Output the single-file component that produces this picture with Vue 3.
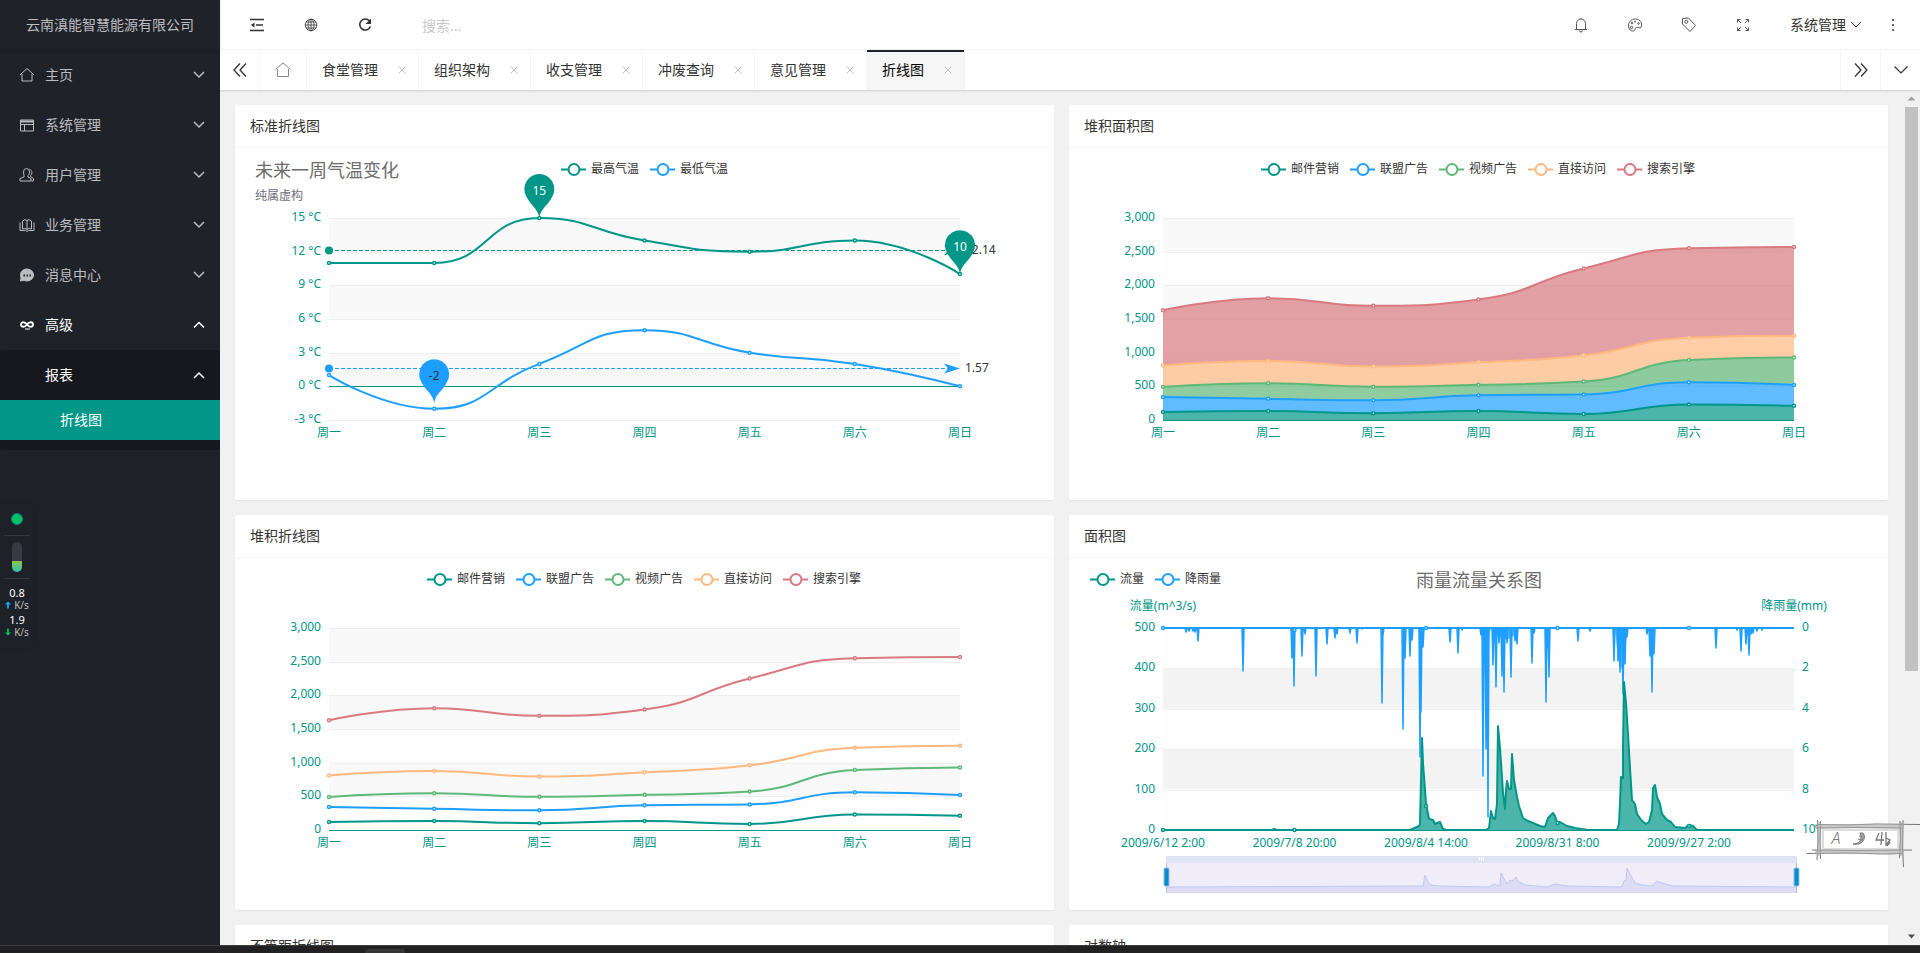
<script setup>
const GREEN = '#009688'
const BLUE = '#1E9FFF'
const palette = [GREEN, BLUE, '#5FB878', '#FFB980', '#D87A80']
const days = ['周一', '周二', '周三', '周四', '周五', '周六', '周日']

/* Plot area inside every chart, in SVG units */
const plot = { left: 94, right: 725, top: 70, bottom: 272 }
const plotWidth = plot.right - plot.left
const plotHeight = plot.bottom - plot.top
const dayX = (i) => plot.left + (plotWidth * i) / 6
const scaleY = (v, min, max) => plot.bottom - (plotHeight * (v - min)) / (max - min)

const menu = [
  { name: '主页', icon: 'home' },
  { name: '系统管理', icon: 'window' },
  { name: '用户管理', icon: 'user' },
  { name: '业务管理', icon: 'book' },
  { name: '消息中心', icon: 'chat' },
  { name: '高级', icon: 'infinity', open: true },
]
const tabs = ['食堂管理', '组织架构', '收支管理', '冲废查询', '意见管理', '折线图']

const between = (v, a, b) => Math.max(Math.min(v, Math.max(a, b)), Math.min(a, b))

/* Smooth segments whose control points never leave the range of their two ends */
function curveSegments(points, smooth = 0.5) {
  const n = points.length
  const incoming = points.map((p) => [...p])
  const outgoing = points.map((p) => [...p])
  for (let i = 1; i < n - 1; i++) {
    const [p, a, b] = [points[i], points[i - 1], points[i + 1]]
    const la = Math.hypot(p[0] - a[0], p[1] - a[1])
    const lb = Math.hypot(p[0] - b[0], p[1] - b[1])
    const ratio = lb / (la + lb)
    for (const k of [0, 1]) {
      const v = b[k] - a[k]
      let out = between(p[k] + v * smooth * ratio, p[k], b[k])
      let inc = p[k] - ((out - p[k]) * la) / lb
      inc = between(inc, a[k], p[k])
      out = p[k] + ((p[k] - inc) * lb) / la
      incoming[i][k] = inc
      outgoing[i][k] = out
    }
  }
  return { incoming, outgoing }
}
function forward(points) {
  const { incoming, outgoing } = curveSegments(points)
  return points.slice(1).map((p, i) => `C${outgoing[i]} ${incoming[i + 1]} ${p}`).join('')
}
function backward(points) {
  const { incoming, outgoing } = curveSegments(points)
  let d = ''
  for (let i = points.length - 1; i > 0; i--) d += `C${incoming[i]} ${outgoing[i - 1]} ${points[i - 1]}`
  return d
}
const linePath = (points) => `M${points[0]}${forward(points)}`

/* Weekly temperature */
const tempSeries = [
  { name: '最高气温', color: GREEN, data: [11, 11, 15, 13, 12, 13, 10], avg: '12.14' },
  { name: '最低气温', color: BLUE, data: [1, -2, 2, 5, 3, 2, 0], avg: '1.57' },
].map((s) => {
  const points = s.data.map((v, i) => [dayX(i), scaleY(v, -3, 15)])
  return { ...s, points, path: linePath(points), avgY: Math.floor(scaleY(Number(s.avg), -3, 15)) + 0.5 }
})
const pins = [
  { x: dayX(2), y: scaleY(15, -3, 15), label: '15', color: GREEN, text: '#fff' },
  { x: dayX(6), y: scaleY(10, -3, 15), label: '10', color: GREEN, text: '#fff' },
  { x: dayX(1), y: scaleY(-1.5, -3, 15), label: '-2', color: BLUE, text: '#333' },
]

/* Stacked traffic sources */
const sources = [
  ['邮件营销', [120, 132, 101, 134, 90, 230, 210]],
  ['联盟广告', [220, 182, 191, 234, 290, 330, 310]],
  ['视频广告', [150, 232, 201, 154, 190, 330, 410]],
  ['直接访问', [320, 332, 301, 334, 390, 330, 320]],
  ['搜索引擎', [820, 932, 901, 934, 1290, 1330, 1320]],
]
const totals = [0, 0, 0, 0, 0, 0, 0]
let below = totals.map((_, i) => [dayX(i), plot.bottom])
const stacked = sources.map(([name, data], k) => {
  data.forEach((v, i) => (totals[i] += v))
  const points = totals.map((v, i) => [dayX(i), scaleY(v, 0, 3000)])
  const path = linePath(points)
  const area = `${path}L${below[below.length - 1]}${backward(below)}Z`
  below = points
  return { name, color: palette[k], points, path, area }
})

function legend(names, start) {
  const widths = names.map((n) => n.length * 12 + 31)
  const total = widths.reduce((a, b) => a + b, 0) + 10 * (names.length - 1)
  let x = start ?? Math.ceil((819 - total) / 2)
  return names.map((name, i) => {
    const item = { name, x, color: palette[i] }
    x += widths[i] + 10
    return item
  })
}
function axis(labels, firstShaded) {
  const step = plotHeight / (labels.length - 1)
  return {
    ticks: labels.map((label, i) => ({ label, y: plot.top + step * i, line: Math.round(plot.top + step * i) + 0.5 })),
    bands: labels.slice(1).map((_, i) => ({ y: plot.top + step * i, height: step, shaded: (i % 2 === 0) === firstShaded })),
  }
}
const stackAxis = axis(['3,000', '2,500', '2,000', '1,500', '1,000', '500', '0'], true)
const stackLegend = legend(sources.map((s) => s[0]))

/* Rainfall: [x, depth] of each burst; flow: outline of the river level */
const rain = [
  [117, 5], [120, 4], [124, 4], [126, 5], [129, 14], [174, 44], [174, 16], [223, 31], [225, 59], [233, 29], [236, 7],
  [247, 49], [247, 12], [258, 17], [266, 11], [268, 7], [281, 6], [288, 16], [293, 2], [313, 76], [314, 8], [334, 102],
  [336, 31], [341, 29], [343, 13], [351, 130], [352, 85], [354, 20], [381, 15], [389, 26], [393, 3], [412, 8],
  [414, 149], [417, 122], [419, 190], [424, 38], [427, 60], [430, 16], [433, 49], [435, 65], [438, 16], [442, 50],
  [446, 14], [448, 17], [463, 36], [465, 6], [477, 75], [478, 21], [480, 50], [509, 14], [521, 4], [545, 34],
  [549, 34], [551, 45], [554, 67], [556, 37], [558, 10], [578, 7], [581, 29], [583, 65], [585, 27], [647, 21],
  [668, 3], [672, 24], [677, 17], [680, 28], [682, 7], [684, 6], [688, 4], [693, 3],
]
const rainPath = rain.map(([x, d]) => `M${x - 1} 70L${x} ${70 + d - 1}L${x + 1} 70`).join('')
const rainFill = 'M546 70L549 100L552 112L556 100L558 70ZM411 70L414 78L420 78L422 70ZM424 70L427 78L438 82L448 76L449 70Z'
const flow = [
  [94, 272], [203, 272], [205, 271], [208, 272], [341, 272], [350, 268], [351, 266], [353, 180], [354, 205], [357, 246],
  [360, 261], [364, 262], [366, 266], [371, 264], [374, 271], [378, 272], [417, 272], [420, 270], [422, 253],
  [424, 260], [426, 261], [428, 246], [429, 168], [431, 190], [434, 235], [436, 251], [437, 232], [438, 223],
  [440, 231], [442, 231], [443, 196], [445, 222], [448, 239], [450, 248], [454, 260], [459, 263], [464, 265],
  [471, 268], [476, 269], [479, 260], [484, 255], [486, 258], [488, 264], [491, 264], [498, 268], [506, 270],
  [519, 272], [548, 272], [550, 266], [551, 245], [552, 219], [554, 220], [554, 190], [555, 124], [557, 145],
  [558, 160], [561, 210], [563, 242], [566, 246], [568, 256], [573, 263], [577, 266], [580, 264], [583, 252],
  [584, 230], [586, 227], [588, 239], [591, 246], [593, 256], [598, 262], [602, 264], [606, 269], [616, 270],
  [620, 267], [624, 268], [628, 272], [725, 272],
]
const flowLine = 'M' + flow.map((p) => p.join(' ')).join('L')
const preview = [
  [97, 329], [354, 328], [356, 317], [359, 324], [362, 327], [370, 328], [420, 329], [425, 326], [431, 328], [432, 315],
  [438, 326], [441, 322], [444, 323], [447, 319], [449, 323], [456, 327], [478, 329], [486, 326], [498, 328],
  [553, 329], [555, 323], [557, 322], [558, 310], [562, 318], [566, 325], [573, 327], [583, 328], [588, 323],
  [593, 325], [604, 328], [728, 329],
]
const previewLine = 'M' + preview.map((p) => p.join(' ')).join('L')
const dates = ['2009/6/12 2:00', '2009/7/8 20:00', '2009/8/4 14:00', '2009/8/31 8:00', '2009/9/27 2:00']
const dateX = (i) => plot.left + i * 131.5
const rainMarks = [70, 72, 70, 70, 70]
const flowMarks = [272, 272, 248, 265, 268]

const cards = [
  { id: 'temp', title: '标准折线图', axis: axis(['15 °C', '12 °C', '9 °C', '6 °C', '3 °C', '0 °C', '-3 °C'], true), legend: legend(['最高气温', '最低气温']), zero: 238.5, x: days },
  { id: 'area', title: '堆积面积图', axis: stackAxis, legend: stackLegend, zero: 272.5, x: days },
  { id: 'stack', title: '堆积折线图', axis: stackAxis, legend: stackLegend, zero: 272.5, x: days },
  { id: 'rain', title: '面积图', axis: axis(['500', '400', '300', '200', '100', '0'], false), legend: legend(['流量', '降雨量'], 21), zero: 272.5, x: dates },
  { id: 'uneven', title: '不等距折线图' },
  { id: 'log', title: '对数轴' },
]
</script>

<template>
  <div class="app">
    <div class="shell">
      <aside class="side">
        <div class="logo">云南滇能智慧能源有限公司</div>
        <nav class="menu">
          <a v-for="m in menu" :key="m.name" href="#" class="item" :class="{ open: m.open }">
            <svg class="icon" width="16" height="16" viewBox="0 0 16 16" fill="none" stroke="currentColor">
              <path v-if="m.icon === 'home'" d="M1 8 8 1.5 15 8M3 7V14H13V7" />
              <g v-else-if="m.icon === 'window'">
                <path d="M1.5 3H14.5V14H1.5ZM1.5 7.500H14.5M5.500 7.500V14" /><path d="M1.500 4.500H14.500" stroke-width="2" />
              </g>
              <g v-else-if="m.icon === 'user'">
                <path d="M4.500 5a3 3.500 0 0 1 6 0c0 2-.8 3-1.500 3.500v1.500l3 1.500v2.500H1v-2.500l4-1.500v-1.500C4.800 7.500 4.500 6.500 4.500 5Z" />
                <path d="M10.500 2.500c3 .5 3 4.500 1 6v1l3 2v2.500h-2" />
              </g>
              <g v-else-if="m.icon === 'book'">
                <path d="M3.500 12V4Q6 1.500 8 3.500 10 1.500 12.500 4V12Q10 10.500 8 12.500 6 10.500 3.500 12ZM8 3.500V12.500" />
                <path d="M1 5.500V13.500H6.500L8 14.500 9.500 13.500H15V5.500" />
              </g>
              <g v-else-if="m.icon === 'chat'">
                <path d="M8 2a6.500 6 0 1 1-3 11.300L1.500 14 2 10.500A6.300 6 0 0 1 8 2Z" fill="currentColor" />
                <path d="M4.500 8.500h1.500M7.500 8.500H9M10.500 8.500H12" class="cut" stroke-width="2" />
              </g>
              <g v-else>
                <path d="M8 7.500C6 4.500 2 4.500 2 7.500S6 10.500 8 7.500 14 4.500 14 7.500 10 10.500 8 7.500Z" stroke-width="1.800" />
                <path d="M6 12H11" />
              </g>
            </svg>
            <span>{{ m.name }}</span>
            <svg class="chevron" width="12" height="8" viewBox="0 0 12 8" fill="none" stroke="currentColor" stroke-width="1.5">
              <path :d="m.open ? 'M1 6.500 6 1.500 11 6.500' : 'M1 1 6 6 11 1'" />
            </svg>
          </a>
          <div class="submenu">
            <a href="#" class="item open">
              <span class="icon"></span>
              <span>报表</span>
              <svg class="chevron" width="12" height="8" viewBox="0 0 12 8" fill="none" stroke="currentColor" stroke-width="1.5">
                <path d="M1 7 6 2 11 7" />
              </svg>
            </a>
            <a href="#" class="leaf">折线图</a>
          </div>
        </nav>
        <div class="monitor">
          <i class="dot"></i>
          <div class="gauge"><i></i></div>
          <div class="rates">
            <div class="rate">0.8</div>
            <div class="unit"><svg width="6" height="8" viewBox="0 0 7 8"><path d="M3.500 0 7 3.500H4.500V8H2.500V3.500H0Z" fill="#1ea5ff" /></svg>K/s</div>
            <div class="rate">1.9</div>
            <div class="unit"><svg width="6" height="8" viewBox="0 0 7 8"><path d="M3.500 8 7 4.500H4.500V0H2.500V4.500H0Z" fill="#00c265" /></svg>K/s</div>
          </div>
        </div>
      </aside>

      <main class="main">
        <header class="header">
          <button class="tool" aria-label="侧边伸缩">
            <svg width="16" height="16" viewBox="0 0 16 16" fill="none" stroke="currentColor" stroke-width="1.500">
              <path d="M1 2.500H15M7 8H14M1 13.500H15" /><path d="M5.500 5.500V10.500L2 8Z" fill="currentColor" stroke="none" />
            </svg>
          </button>
          <button class="tool" aria-label="前台">
            <svg width="14" height="14" viewBox="0 0 14 14" fill="none" stroke="currentColor" stroke-width=".8">
              <circle cx="7" cy="7" r="5.800" /><ellipse cx="7" cy="7" rx="3" ry="5.800" /><path d="M7 1V13M1 7H13M2 4H12M2 10H12" />
            </svg>
          </button>
          <button class="tool" aria-label="刷新">
            <svg width="16" height="16" viewBox="0 0 16 16" fill="none" stroke="currentColor" stroke-width="1.600">
              <path d="M12.500 4A5.500 5.500 0 1 0 13.400 9.500" /><path d="M14 1.500V7H8.500Z" fill="currentColor" stroke="none" />
            </svg>
          </button>
          <input class="search" type="text" placeholder="搜索..." aria-label="搜索" />
          <div class="tools-right">
            <button class="tool thin" aria-label="消息">
              <svg width="14" height="16" viewBox="0 0 14 16" fill="none" stroke="currentColor">
                <path d="M1 12.500H13M2.500 12.500V6.500a4.500 4.500 0 0 1 9 0V12.500M5.500 13.500a1.500 1.500 0 0 0 3 0M7 2V1" />
              </svg>
            </button>
            <button class="tool thin" aria-label="主题">
              <svg width="16" height="16" viewBox="0 0 16 16" fill="none" stroke="currentColor">
                <path d="M9.500 10.500C12 9.500 12.500 12 14 10.500 16 5.500 12.500 2 8.500 2 4 2 1 5.500 1.500 9.500 2 14.500 7 15 8 12.500 8.500 11.500 8 11 9.500 10.500Z" />
                <circle cx="5" cy="6" r=".8" /><circle cx="8" cy="4.500" r=".6" /><circle cx="11.500" cy="6.500" r=".8" /><circle cx="4.500" cy="10.500" r="1.200" />
              </svg>
            </button>
            <button class="tool thin" aria-label="便签">
              <svg width="16" height="16" viewBox="0 0 16 16" fill="none" stroke="currentColor">
                <path d="M1.500 1.500 7.500 1 14.500 8.500 9 14.500 1.500 7Z" /><circle cx="5.300" cy="4.800" r="1.500" />
              </svg>
            </button>
            <button class="tool thin" aria-label="全屏">
              <svg width="14" height="14" viewBox="0 0 14 14" fill="none" stroke="currentColor">
                <path d="M1.500 4.500V1.500H4.500M1.500 1.500 5 5M9.500 1.500H12.500V4.500M12.500 1.500 9 5M1.500 9.500V12.500H4.500M1.500 12.500 5 9M9.500 12.500H12.500V9.500M12.500 12.500 9 9" />
              </svg>
            </button>
            <button class="account">
              系统管理
              <svg width="12" height="8" viewBox="0 0 12 8" fill="none" stroke="currentColor"><path d="M1 1 6 6 11 1" /></svg>
            </button>
            <button class="tool" aria-label="更多">
              <svg width="4" height="14" viewBox="0 0 4 14" fill="currentColor">
                <circle cx="2" cy="2" r="1" /><circle cx="2" cy="7" r="1" /><circle cx="2" cy="12" r="1" />
              </svg>
            </button>
          </div>
        </header>

        <div class="tabbar">
          <button class="ctrl" aria-label="向左">
            <svg width="16" height="16" viewBox="0 0 16 16" fill="none" stroke="currentColor" stroke-width="1.300"><path d="M8 1.500 2 8 8 14.500M14 1.500 8 8 14 14.500" /></svg>
          </button>
          <a class="tab home" href="#" aria-label="主页">
            <svg width="16" height="16" viewBox="0 0 16 16" fill="none" stroke="currentColor"><path d="M.5 7.500 8 1 15.500 7.500M2.500 7V14.500H13.500V7" /></svg>
          </a>
          <div v-for="(t, i) in tabs" :key="t" class="tab" :class="{ active: i === tabs.length - 1 }">
            <a href="#">{{ t }}</a>
            <button class="close" aria-label="关闭">
              <svg width="8" height="8" viewBox="0 0 8 8" fill="none" stroke="currentColor"><path d="M.5.5 7.500 7.500M7.500.5.5 7.500" /></svg>
            </button>
          </div>
          <button class="ctrl next" aria-label="向右">
            <svg width="16" height="16" viewBox="0 0 16 16" fill="none" stroke="currentColor" stroke-width="1.300"><path d="M2 1.500 8 8 2 14.500M8 1.500 14 8 8 14.500" /></svg>
          </button>
          <button class="ctrl down" aria-label="页签操作">
            <svg width="16" height="10" viewBox="0 0 16 10" fill="none" stroke="currentColor" stroke-width="1.200"><path d="M1.500 1.500 8 8 14.500 1.500" /></svg>
          </button>
        </div>

        <div class="body">
          <div class="cards">
            <section v-for="c in cards" :key="c.id" class="card">
              <h2>{{ c.title }}</h2>
              <svg class="chart" viewBox="0 0 819 352">
                <template v-if="c.axis">
                  <rect v-for="b in c.axis.bands" :key="b.y" :x="plot.left" :y="b.y" :width="plotWidth" :height="b.height"
                    :class="b.shaded ? (c.id === 'rain' ? 'band-dark' : 'band') : 'band-light'" />
                  <g v-for="t in c.axis.ticks" :key="t.label">
                    <path class="rule" :d="`M${plot.left} ${t.line}H${plot.right}`" />
                    <text class="label end" x="86" :y="t.y + 3">{{ t.label }}</text>
                  </g>
                  <text v-for="(d, i) in c.x" :key="d" class="label mid" :x="c.id === 'rain' ? dateX(i) : dayX(i)" y="289">{{ d }}</text>
                  <path class="axis" :d="`M${plot.left} ${c.zero}H${plot.right}`" />
                  <g v-for="l in c.legend" :key="l.name">
                    <path :d="`M${l.x} 21.500h25`" :stroke="l.color" stroke-width="2" />
                    <circle :cx="l.x + 13" cy="21.500" r="5.500" fill="#fff" :stroke="l.color" stroke-width="2" />
                    <text class="legend" :x="l.x + 30" y="25">{{ l.name }}</text>
                  </g>
                </template>

                <g v-if="c.id === 'temp'">
                  <text class="title" x="20" y="29">未来一周气温变化</text>
                  <text class="subtitle" x="20" y="52">纯属虚构</text>
                  <g v-for="s in tempSeries" :key="s.name">
                    <path :d="s.path" fill="none" :stroke="s.color" stroke-width="2" />
                    <circle v-for="p in s.points" :key="p[0]" class="point" :cx="p[0]" :cy="p[1]" r="1.500" :stroke="s.color" />
                    <path :d="`M${plot.left} ${s.avgY}H${plot.right - 12}`" :stroke="s.color" stroke-dasharray="4 2" />
                    <circle :cx="plot.left" :cy="s.avgY" r="4" :fill="s.color" />
                    <path :d="`M${plot.right} ${s.avgY}l-16 -5l4 5l-4 5z`" :fill="s.color" />
                    <text class="legend" x="730" :y="s.avgY + 3">{{ s.avg }}</text>
                  </g>
                  <g v-for="p in pins" :key="p.label" :transform="`translate(${p.x} ${p.y})`">
                    <path d="M0 0C-1 -9 -9 -13 -13 -21.500A15 15 0 1 1 13 -21.500C9 -13 1 -9 0 0Z" :fill="p.color" />
                    <text class="pin" x="0" y="-23" :fill="p.text">{{ p.label }}</text>
                  </g>
                </g>

                <g v-if="c.id === 'area' || c.id === 'stack'">
                  <template v-if="c.id === 'area'">
                    <path v-for="s in stacked" :key="s.name" :d="s.area" :fill="s.color" fill-opacity=".7" />
                  </template>
                  <g v-for="s in stacked" :key="s.name">
                    <path :d="s.path" fill="none" :stroke="s.color" stroke-width="2" />
                    <circle v-for="p in s.points" :key="p[0]" class="point" :cx="p[0]" :cy="p[1]" r="1.500" :stroke="s.color" />
                  </g>
                </g>

                <g v-if="c.id === 'rain'">
                  <text class="title mid" x="410" y="29">雨量流量关系图</text>
                  <text class="label mid" x="94" y="52">流量(m^3/s)</text>
                  <text class="label mid" x="725" y="52">降雨量(mm)</text>
                  <text v-for="(t, i) in c.axis.ticks" :key="t.y" class="label" x="733" :y="t.y + 3">{{ i * 2 }}</text>
                  <path :d="rainFill" :fill="BLUE" fill-opacity=".7" />
                  <path :d="rainPath" :fill="BLUE" :stroke="BLUE" stroke-width="1.500" stroke-linejoin="round" />
                  <path :d="`M${plot.left} 70H${plot.right}`" :stroke="BLUE" stroke-width="2" />
                  <path :d="flowLine + 'Z'" :fill="GREEN" fill-opacity=".7" />
                  <path :d="flowLine" fill="none" :stroke="GREEN" stroke-width="2" stroke-linejoin="round" />
                  <circle v-for="(y, i) in rainMarks" :key="'r' + i" class="point" :cx="dateX(i)" :cy="y" r="1.500" :stroke="BLUE" />
                  <circle v-for="(y, i) in flowMarks" :key="'f' + i" class="point" :cx="dateX(i)" :cy="y" r="1.500" :stroke="GREEN" />
                  <rect x="97" y="298" width="631" height="7" fill="#dee4f2" />
                  <rect x="97" y="305" width="631" height="30" fill="#f0edf8" />
                  <path :d="previewLine + 'V335H97Z'" fill="#dedcf5" />
                  <path :d="previewLine" fill="none" stroke="#bccaf2" />
                  <path d="M410.500 299.500v3M412.500 299.500v3M414.500 299.500v3" stroke="#fff" />
                  <path d="M97.500 305V335M727.500 305V335" stroke="#b4bdd4" />
                  <rect x="95" y="310" width="5" height="18" rx="1" fill="#058ccf" stroke="#9fb9dc" />
                  <rect x="725" y="310" width="5" height="18" rx="1" fill="#058ccf" stroke="#9fb9dc" />
                </g>
              </svg>
            </section>
          </div>
          <div class="scrollbar">
            <svg width="17" height="17" viewBox="0 0 17 17"><path d="M4.500 10.500 8.500 6.500 12.500 10.500Z" fill="#a0a0a0" /></svg>
            <i class="thumb"></i>
            <svg width="17" height="17" viewBox="0 0 17 17"><path d="M5 6.500 8.500 10.500 12 6.500Z" fill="#505050" /></svg>
          </div>
        </div>
      </main>
    </div>
    <div class="taskbar"><i></i></div>

    <svg class="ime" width="114" height="52" viewBox="0 0 114 52" fill="none" stroke="#777">
      <rect x="13" y="8" width="82" height="26" fill="#f4f4f4" stroke="none" />
      <rect x="17" y="12" width="75" height="19" fill="#fff" stroke="#ddd" stroke-width="2" />
      <path d="M8 8.500 13 6.500 40 7 70 6 114 6.500M10 10 50 9.500 96 10M1 35.500 40 35 80 36 96 35.500M6 32 50 32.500 106 32" />
      <path d="M11.500 2 12 22 11 42M14.500 3 14 25 14.500 41M94 3 94.500 20 93.500 40M97 2 96.500 30 97.500 49" />
      <path d="M9 8H98M9 34H98M13 4V38M95.500 4V38" stroke="#aaa" stroke-width="4" opacity=".6" />
      <text x="30" y="26" class="ime-letter">A</text>
      <path d="M57 15C61 20 56 28 47 26C53 26 57 22 54 15Z" fill="#aaa" />
      <path d="M53 18l4 1M52 21l5 1" />
      <path d="M73 15 70 22H78M76 14 75 27M80 14V27L84 22 80 20M84 24l-3 4" stroke-width="1.300" />
    </svg>
  </div>
</template>

<style>
html,
body {
  margin: 0;
  overflow: hidden;
}
</style>

<style scoped>
.app {
  position: relative;
  display: flex;
  flex-direction: column;
  height: 100vh;
  font: 14px/20px "Noto Sans", "Noto Sans CJK SC", sans-serif;
  color: #333;
  background: #f1f1f1;
}
.app *,
.app {
  box-sizing: border-box;
}
a {
  color: inherit;
  text-decoration: none;
}
button {
  display: flex;
  align-items: center;
  justify-content: center;
  padding: 0;
  border: 0;
  background: none;
  font: inherit;
  color: inherit;
}
svg {
  flex: none;
}
.shell {
  display: flex;
  flex: 1;
  min-height: 0;
}
.side {
  position: relative;
  width: 220px;
  flex: none;
  background: #20222a;
  color: #bcbdbf;
}
.logo {
  height: 50px;
  line-height: 50px;
  text-align: center;
  box-shadow: 0 1px 2px rgba(0, 0, 0, 0.15);
}
.item {
  display: flex;
  align-items: center;
  height: 50px;
  padding: 0 15px 0 19px;
}
.item .icon {
  width: 16px;
  margin-right: 10px;
}
.chevron {
  margin-left: auto;
}
.cut {
  stroke: #20222a;
}
.open {
  color: #fff;
}
.submenu {
  padding-bottom: 10px;
  background: #17181d;
  border-radius: 2px;
}
.leaf {
  display: block;
  height: 40px;
  padding-left: 60px;
  line-height: 40px;
  color: #fff;
  background: #009688;
}
.monitor {
  position: absolute;
  top: 502px;
  left: 0;
  width: 34px;
  padding: 11px 4px 8px;
  border-radius: 0 8px 8px 0;
  background: #1f2129;
  box-shadow: 0 0 4px rgba(0, 0, 0, 0.1);
}
.dot {
  display: block;
  width: 12px;
  height: 12px;
  margin: 0 auto 10px;
  border: 1px solid #0f7f86;
  border-radius: 50%;
  background: #00c265;
}
.gauge {
  padding: 6px 0;
  border: solid #343842;
  border-width: 1px 0;
}
.gauge i {
  display: block;
  width: 10px;
  height: 30px;
  margin: 0 auto;
  border-radius: 5px;
  background: linear-gradient(#373a42 19px, #8bc34a 19px, #2fc3b5);
}
.rates {
  padding-top: 7px;
  text-align: center;
}
.rate {
  font-size: 11px;
  line-height: 14px;
  color: #fff;
}
.unit {
  display: flex;
  align-items: center;
  justify-content: center;
  gap: 3px;
  font-size: 10px;
  line-height: 10px;
  margin-bottom: 3px;
}
.main {
  display: flex;
  flex: 1;
  flex-direction: column;
  min-width: 0;
}
.header {
  display: flex;
  height: 50px;
  padding-left: 10px;
  border-bottom: 1px solid #f5f5f5;
  background: #fff;
}
.tool {
  width: 54px;
}
.thin {
  color: #555;
}
.search {
  width: 220px;
  margin-left: 20px;
  padding: 3px 10px 0;
  border: 0;
  outline: 0;
  font: inherit;
}
.search::placeholder {
  color: #c8c8c8;
}
.tools-right {
  display: flex;
  margin-left: auto;
}
.account {
  gap: 4px;
  padding: 0 4px 0 20px;
}
.tabbar {
  position: relative;
  display: flex;
  height: 40px;
  background: #fff;
  box-shadow: 0 1px 2px rgba(0, 0, 0, 0.15);
}
.ctrl {
  width: 40px;
  border-right: 1px solid #f5f5f5;
}
.next,
.down {
  border-right: 0;
  border-left: 1px solid #f5f5f5;
}
.next {
  margin-left: auto;
}
.tab {
  display: flex;
  align-items: center;
  padding: 0 12px 0 15px;
  border-right: 1px solid #f5f5f5;
}
.home {
  padding: 0 15px;
  color: #888;
}
.close {
  width: 8px;
  margin-left: 20px;
  color: #c2c2c2;
}
.active {
  color: #000;
  background: linear-gradient(#20222a 2px, #f6f6f6 2px);
}
.body {
  display: flex;
  flex: 1;
  min-height: 0;
}
.cards {
  display: grid;
  flex: 1;
  grid-template-columns: 1fr 1fr;
  gap: 15px;
  align-content: start;
  padding: 15px;
  overflow: hidden;
}
.card {
  border-radius: 2px;
  background: #fff;
  box-shadow: 0 1px 2px rgba(0, 0, 0, 0.06);
}
.card h2 {
  margin: 0;
  padding: 0 15px;
  border-bottom: 1px solid #f5f5f5;
  font-size: 14px;
  font-weight: 400;
  line-height: 42px;
}
.chart {
  display: block;
  width: 100%;
}
.chart text {
  font-size: 12px;
}
.chart .title {
  font-size: 18px;
  fill: #6c6c6c;
}
.chart .subtitle {
  fill: #6e6e7c;
}
.label {
  fill: #009688;
}
.legend {
  fill: #333;
}
.end {
  text-anchor: end;
}
.mid,
.pin {
  text-anchor: middle;
}
.band {
  fill: #f9f9f9;
}
.band-dark {
  fill: #f3f3f3;
}
.band-light {
  fill: #fefefe;
}
.rule {
  stroke: #eee;
}
.axis {
  stroke: #009688;
}
.point {
  fill: #fff;
  stroke-width: 1.5px;
}
.scrollbar {
  display: flex;
  flex-direction: column;
  width: 17px;
  background: #f1f1f1;
}
.thumb {
  width: 13px;
  height: 66%;
  margin: 0 2px auto;
  background: #c1c1c1;
}
.taskbar {
  height: 8px;
  flex: none;
  padding-left: 365px;
  border-top: 1px solid #3c3c3c;
  background: #212121;
}
.taskbar i {
  display: block;
  width: 40px;
  height: 4px;
  margin-top: 3px;
  border-radius: 3px 3px 0 0;
  background: #363636;
}
.ime {
  position: absolute;
  right: 0;
  bottom: 83px;
}
.ime-letter {
  font-size: 16px;
  font-style: italic;
  font-weight: 300;
  text-anchor: middle;
  fill: #777;
  stroke: none;
}
</style>
